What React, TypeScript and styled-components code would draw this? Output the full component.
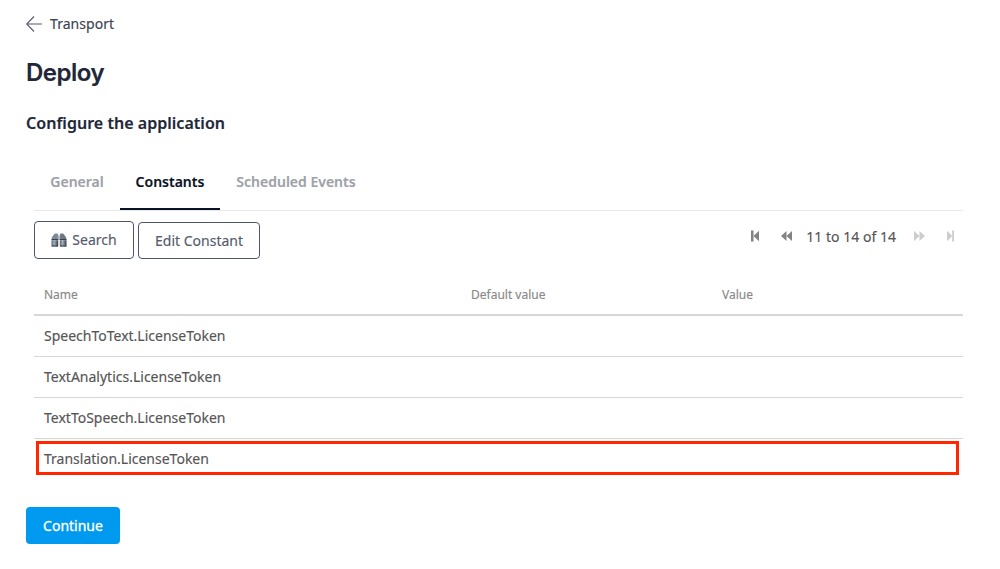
import React from "react";
import styled, { createGlobalStyle } from "styled-components";

const GlobalStyle = createGlobalStyle`
  *, *::before, *::after { box-sizing: border-box; }
  body {
    margin: 0;
    background: #fff;
    color: #555;
    font-family: "Noto Sans", sans-serif;
    font-size: 14px;
    -webkit-text-stroke: 0.15px currentColor;
  }
`;

const Page = styled.main`
  display: flex;
  flex-direction: column;
  align-items: flex-start;
  width: 1000px;
  height: 569px;
  padding: 14px 37px 0 26px;
  overflow: hidden;
`;

const BackLink = styled.a`
  display: flex;
  align-items: center;
  gap: 8px;
  height: 20px;
  color: #3b4251;
  letter-spacing: 0.05px;
`;

const BackLabel = styled.span`
  padding-bottom: 2px;
`;

const Title = styled.h1`
  margin: 23px 0 0;
  height: 32px;
  line-height: 32px;
  font-family: Inter, sans-serif;
  font-size: 24px;
  font-weight: 600;
  letter-spacing: -0.5px;
  color: #212738;
`;

const Subtitle = styled.h2`
  margin: 22px 0 0;
  height: 24px;
  line-height: 24px;
  font-size: 16px;
  font-weight: 600;
  letter-spacing: 0.03px;
  color: #212738;
`;

const Panel = styled.section`
  display: flex;
  flex-direction: column;
  align-self: stretch;
  margin: 20px 0 0 8px;
`;

const Tabs = styled.nav`
  display: flex;
  height: 56px;
  border-bottom: 1px solid #e7e8ea;
`;

const Tab = styled.a<{ $active?: boolean; $width: number }>`
  width: ${(p) => p.$width}px;
  height: 55px;
  padding-top: 17px;
  text-align: center;
  white-space: nowrap;
  line-height: 20px;
  font-weight: 600;
  color: ${(p) => (p.$active ? "#0a1326" : "#9da1a8")};
  border-bottom: 2px solid ${(p) => (p.$active ? "#0a1326" : "transparent")};
`;

const Toolbar = styled.div`
  display: flex;
  align-items: flex-end;
  gap: 4px;
  height: 48px;
`;

const Button = styled.button<{ $width: number; $tall?: boolean }>`
  display: flex;
  align-items: center;
  justify-content: center;
  gap: 5px;
  width: ${(p) => p.$width}px;
  height: ${(p) => (p.$tall ? 38 : 37)}px;
  padding: 0 0 ${(p) => (p.$tall ? 1 : 0)}px;
  border: 1px solid #50566a;
  border-radius: 4px;
  background: #fff;
  color: #555b6d;
  font: inherit;
`;

const Pager = styled.div`
  display: flex;
  align-items: center;
  height: 20px;
  margin: 0 8px 13px auto;
`;

const PagerText = styled.span`
  margin: 2px 18px 0 14px;
  line-height: 20px;
  letter-spacing: 0.03px;
`;

const PagerIcon = styled.svg<{ $off?: boolean; $gap?: number }>`
  display: block;
  height: 12px;
  margin-right: ${(p) => p.$gap ?? 0}px;
  margin-bottom: 1px;
  fill: ${(p) => (p.$off ? "#cdcdcd" : "#838383")};
`;

const Table = styled.div`
  display: flex;
  flex-direction: column;
  margin-top: 15px;
`;

const Row = styled.div<{ $head?: boolean; $last?: boolean }>`
  display: grid;
  grid-template-columns: 427px 251px 1fr;
  align-items: center;
  position: relative;
  height: ${(p) => (p.$head ? 42 : 41)}px;
  padding: 0 10px ${(p) => (p.$head ? 0 : p.$last ? 3 : 2)}px;
  border-bottom: ${(p) => (p.$last ? "0" : p.$head ? "2px" : "1px")} solid #d7d7d7;
  color: ${(p) => (p.$head ? "#888" : "#555")};
  font-size: ${(p) => (p.$head ? 12 : 14)}px;
`;

const Highlight = styled.div`
  position: absolute;
  inset: 2px 4px 5px 2px;
  border: 3px solid #ff2600;
`;

const Continue = styled.button`
  width: 94px;
  height: 37px;
  margin-top: 27px;
  padding: 0;
  border: 0;
  border-radius: 4px;
  background: #0099f0;
  color: #fff;
  font: inherit;
  -webkit-text-stroke: 0.3px currentColor;
`;

const BackArrow = () => (
  <svg width="16" height="16" viewBox="0 0 16 16" fill="none" stroke="#555b6b" strokeWidth="1.1">
    <path d="M8 .5.7 8 8 15.5M.7 8H16" />
  </svg>
);

const Binoculars = () => (
  <svg width="16" height="16" viewBox="0 0 16 16">
    <defs>
      <linearGradient id="barrel" x1="0" y1="0" x2="1" y2="0">
        <stop offset="0" stopColor="#59636d" />
        <stop offset="0.4" stopColor="#a3b0bb" />
        <stop offset="1" stopColor="#353d45" />
      </linearGradient>
    </defs>
    <path d="M3 2.500 4 1.500h2.500L7.200 3v5H.8V5.500z" fill="#7d8994" />
    <path d="M8.800 3 9.500 1.500H12l1 1 2.200 3V8H8.800z" fill="#6c7883" />
    <path d="M6.800 3.500h2.400V8H6.800z" fill="#aab5be" />
    <path d="M.5 7h6.700v1.300H.5zM8.800 7h6.700v1.300H8.800z" fill="#3a434c" />
    <rect x=".5" y="8.300" width="6.700" height="6.200" rx=".5" fill="url(#barrel)" />
    <rect x="8.800" y="8.300" width="6.700" height="6.200" rx=".5" fill="url(#barrel)" />
    <path d="M.7 13.600h6.300v.9H.7zM9 13.600h6.300v.9H9z" fill="#39424a" />
  </svg>
);

const names = [
  "SpeechToText.LicenseToken",
  "TextAnalytics.LicenseToken",
  "TextToSpeech.LicenseToken",
  "Translation.LicenseToken",
];

export default function App() {
  return (
    <>
      <GlobalStyle />
      <Page>
        <BackLink>
          <BackArrow />
          <BackLabel>Transport</BackLabel>
        </BackLink>
        <Title>Deploy</Title>
        <Subtitle>Configure the application</Subtitle>
        <Panel>
          <Tabs>
            <Tab $width={86}>General</Tab>
            <Tab $width={100} $active>
              Constants
            </Tab>
            <Tab $width={152}>Scheduled Events</Tab>
          </Tabs>
          <Toolbar>
            <Button $width={100} $tall>
              <Binoculars />
              Search
            </Button>
            <Button $width={122}>Edit Constant</Button>
            <Pager>
              <PagerIcon width="8" viewBox="0 0 8 12" $gap={22}>
                <path d="M0 .5h2.500v11H0zM8 .8v10.400L2.500 6z" />
              </PagerIcon>
              <PagerIcon width="11" viewBox="0 0 11 12">
                <path d="M5.500 1v10L0 6zM11 1v10L5.500 6z" />
              </PagerIcon>
              <PagerText>11 to 14 of 14</PagerText>
              <PagerIcon width="11" viewBox="0 0 11 12" $off $gap={22}>
                <path d="M0 1v10l5.500-5zM5.500 1v10L11 6z" />
              </PagerIcon>
              <PagerIcon width="8" viewBox="0 0 8 12" $off>
                <path d="M5.200.5H7v11H5.200zM0 .8v10.400L5.200 6z" />
              </PagerIcon>
            </Pager>
          </Toolbar>
          <Table>
            <Row $head>
              <span>Name</span>
              <span>Default value</span>
              <span>Value</span>
            </Row>
            {names.map((name, i) => (
              <Row key={name} $last={i === names.length - 1}>
                <span>{name}</span>
                {i === names.length - 1 && <Highlight />}
              </Row>
            ))}
          </Table>
        </Panel>
        <Continue>Continue</Continue>
      </Page>
    </>
  );
}
